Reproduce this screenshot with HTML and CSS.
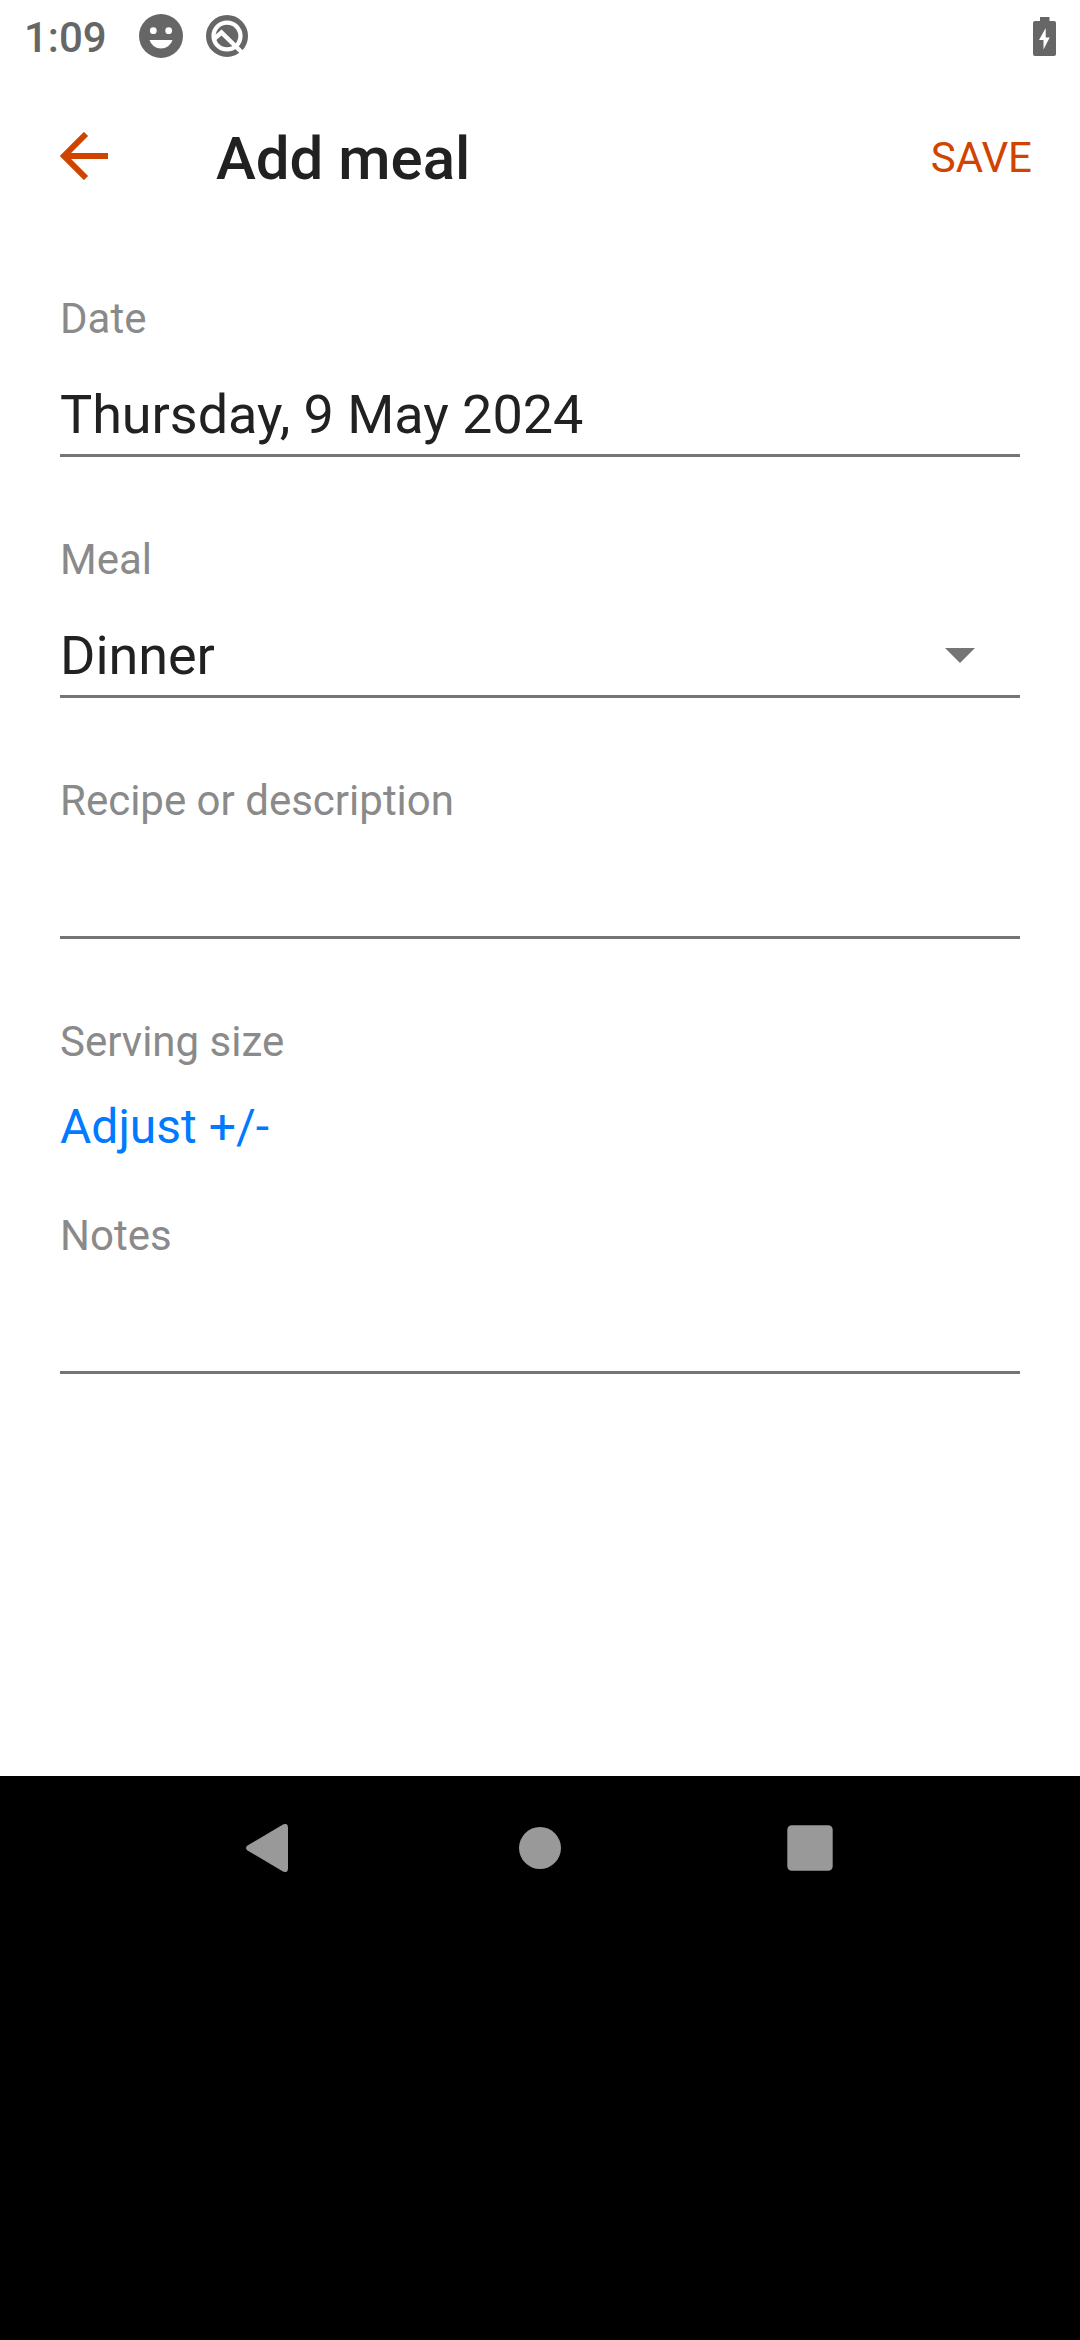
FILE: index.html
```
<!DOCTYPE html>
<html lang="en">
<head>
<meta charset="utf-8">
<title>Add meal</title>
<link rel="stylesheet" href="styles.css">
</head>
<body>
<main class="app">
  <div class="status">
    <span class="clock">1:09</span>
    <svg class="face" viewBox="0 0 44 44"><circle cx="22" cy="22" r="22"/><circle class="hole" cx="14.300" cy="16.700" r="3.400"/><circle class="hole" cx="29.700" cy="16.700" r="3.400"/><path class="hole" d="M10.500 26h23a12 12 0 0 1-23 0z"/></svg>
    <svg class="ring" viewBox="0 0 42 42"><circle class="line" cx="21" cy="21" r="18.300"/><circle cx="21" cy="21" r="11.300"/><path class="line thin" d="M8 24l7.500-6.500L38 39.500"/></svg>
    <svg class="battery" viewBox="0 0 23 39"><path d="M7 0h9.500v4H21a2 2 0 0 1 2 2v31a2 2 0 0 1-2 2H2a2 2 0 0 1-2-2V6a2 2 0 0 1 2-2h5z"/><path class="hole" d="M12.700 11v9.500h4L10.500 32.500V23H6z"/></svg>
  </div>
  <header class="bar">
    <svg class="back" viewBox="0 0 48 48"><path d="M48 24H5M26 2L4 24l22 22"/></svg>
    <h1 class="title">Add meal</h1>
    <span class="save">SAVE</span>
  </header>
  <form class="form">
    <div class="field"><div class="label">Date</div><div class="value">Thursday, 9 May 2024</div></div>
    <div class="field"><div class="label">Meal</div><div class="value">Dinner<svg class="caret" viewBox="0 0 30 15"><path d="M0 0h30L15 15z"/></svg></div></div>
    <div class="field"><div class="label">Recipe or description</div><div class="value"></div></div>
    <div class="field short"><div class="label">Serving size</div><div class="adjust">Adjust +/-</div></div>
    <div class="field"><div class="label">Notes</div><div class="value"></div></div>
  </form>
</main>
<nav class="nav">
  <svg viewBox="0 0 48 48"><path d="M1.500 21.500L37 .5q5-2 5 3v41q0 5-5 3L1.500 26.500q-3-2.500 0-5z"/></svg>
  <svg viewBox="0 0 48 48"><circle cx="24" cy="24" r="21"/></svg>
  <svg viewBox="0 0 48 48"><rect x="1.300" y="1.300" width="45.400" height="45.400" rx="4.500"/></svg>
</nav>
</body>
</html>
```
FILE: styles.css
```
* { box-sizing: border-box; }
body { margin: 0; height: 2340px; background: #000; font-family: Roboto, sans-serif; color: #212121; }
.app { height: 1776px; background: #fff; }
.status { height: 72px; padding: 0 24px; display: flex; align-items: center; color: #666; fill: #666; }
.clock { padding-top: 3px; font-size: 42px; font-weight: 500; width: 115px; }
.face { width: 44px; height: 44px; }
.ring { width: 42px; height: 42px; margin-left: 23px; }
.line { fill: none; stroke: #666; stroke-width: 5.4; }
.thin { stroke: #fff; stroke-width: 4.5; }
.battery { width: 23px; height: 39px; margin-left: auto; }
.hole { fill: #fff; }
.bar { height: 168px; padding: 0 48px 0 60px; display: flex; align-items: center; color: #d04400; }
.back { width: 48px; height: 48px; fill: none; stroke: #d04400; stroke-width: 6; }
.title { margin: 0 0 0 108px; padding-top: 4px; font-size: 60px; font-weight: 500; color: #212121; }
.save { margin-left: auto; padding-top: 2px; font-size: 42px; }
.form { padding: 49px 60px 0; }
.field { height: 241px; }
.short { height: 194px; }
.label { height: 60px; line-height: 60px; font-size: 42px; color: #8a8a8a; }
.value { height: 108px; padding-top: 26px; line-height: 72px; font-size: 54px; letter-spacing: -0.05px; border-bottom: 3px solid #757575; display: flex; align-items: center; }
.caret { width: 30px; height: 15px; margin: 0 45px 0 auto; fill: #757575; }
.adjust { font-size: 48px; line-height: 60px; padding-top: 25px; color: #007aff; }
.nav { height: 144px; display: flex; justify-content: center; align-items: center; gap: 222px; fill: #999; }
.nav svg { width: 48px; height: 48px; }
```
